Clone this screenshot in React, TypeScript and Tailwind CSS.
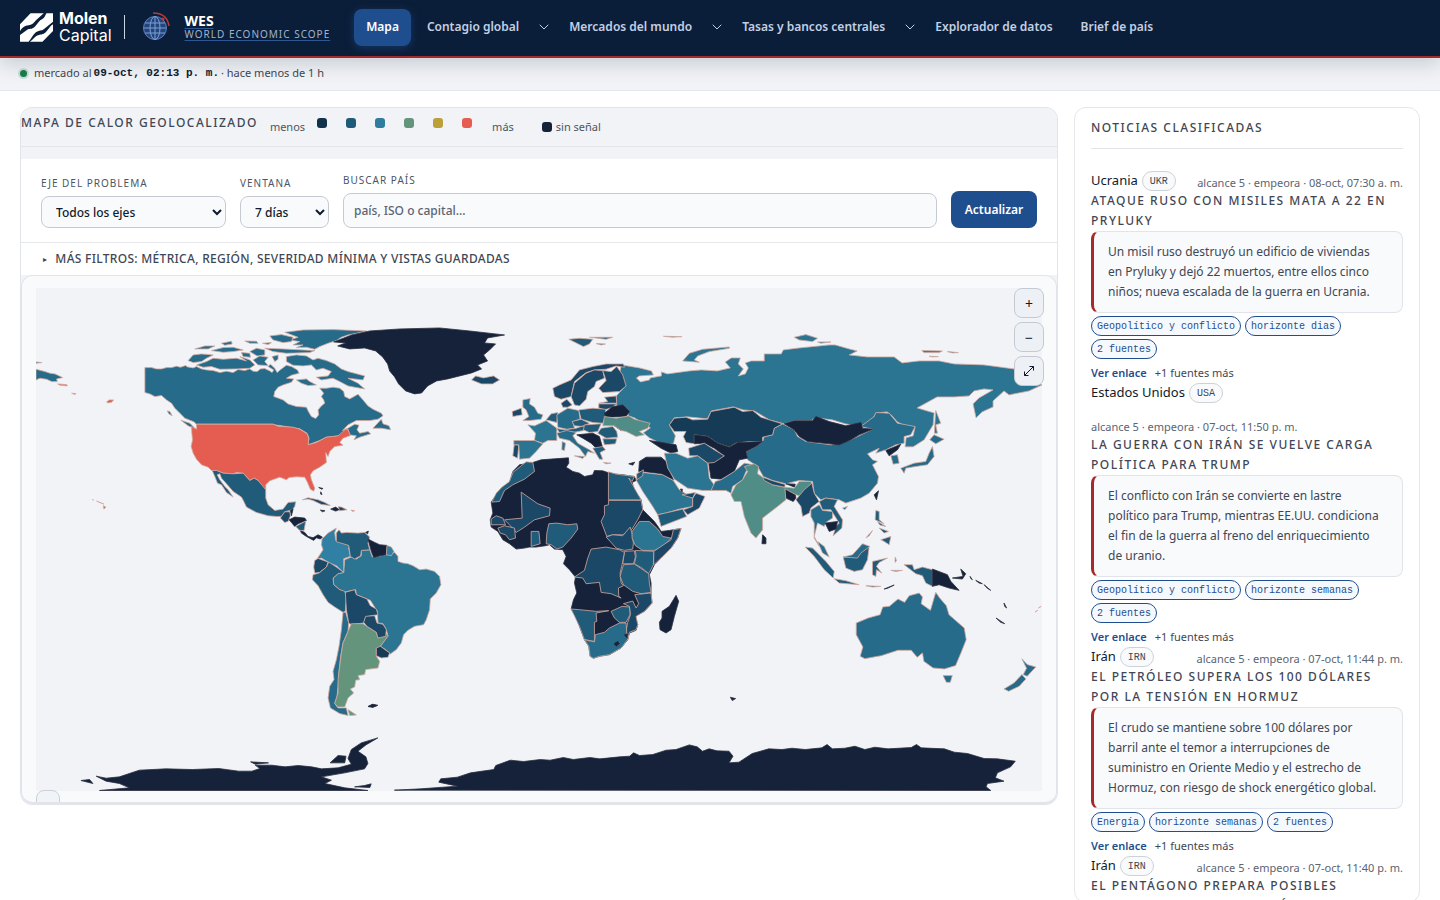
import { ChevronDown } from "lucide-react";
import React from "react";

const tones = {
  none: "#16213a",
  t1: "#163b56",
  t2: "#1b4866",
  t3: "#205b7a",
  t4: "#276b8a",
  t5: "#2b7593",
  t6: "#2f80a3",
  teal: "#508d86",
  green: "#64957c",
  red: "#e55c50",
};

type Shape = [keyof typeof tones, string];

// Every region keeps its own origin and unit so the outlines stay in whole numbers.
const regions: { transform: string; shapes: Shape[] }[] = [
  {
    transform: "translate(20 300) scale(0.33333)",
    shapes: [
      ["t4", "M375 203L395 203 410 207 425 207 440 203 455 203 470 199 482 202 497 197 503 201 520 204 530 200 545 207 560 210 580 212 600 218 620 214 640 218 655 209 675 212 690 207 700 214 712 215 722 207 735 206 750 213 757 218 762 210 745 200 752 193 765 205 772 218 785 207 800 196 815 200 833 210 838 220 815 226 800 235 822 237 815 247 790 255 775 262 765 275 762 290 790 300 805 312 830 320 860 322 866 335 875 350 888 356 897 345 895 330 905 318 915 310 912 300 905 290 912 280 900 265 920 265 940 262 960 265 972 275 975 290 990 297 1003 290 1015 283 1030 300 1045 318 1060 328 1085 340 1090 348 1075 358 1050 362 1010 362 985 375 968 392 985 385 1005 373 1018 376 1012 390 1020 400 1045 395 1053 402 1020 412 1003 420 1010 408 990 405 985 388 975 392 965 407 940 410 920 412 900 422 865 435 868 415 862 400 840 387 800 380 765 375 760 373 530 373 522 366 495 355 480 340 465 325 455 310 440 300 425 287 405 290 390 282 375 278Z"],
      ["t4", "M795 97L850 90 940 89 1040 93 1010 100 985 105 965 112 950 122 925 130 900 140 885 148 860 142 830 143 850 135 820 135 840 125 810 120 835 112Z"],
      ["t4", "M750 108L785 104 820 112 815 125 790 128 760 120ZM735 145L790 147 885 152 870 158 800 160 760 155Z"],
      ["t4", "M505 182L520 165 545 162 580 165 560 175 545 185 520 188ZM530 195L560 185 580 175 610 178 650 175 680 183 660 170 690 180 705 195 690 205 650 207 600 208 575 200 550 202Z"],
      ["t4", "M525 147L555 138 585 138 565 147ZM575 152L610 143 640 142 670 150 640 155 610 157ZM605 130L635 124 637 132 615 136ZM675 123L710 124 715 130 690 130ZM728 130L755 128 745 134ZM690 155L710 145 735 150 735 165 712 168ZM700 180L720 168 745 172 735 185 745 197 715 195ZM665 158L690 160 692 172 670 170ZM757 170L775 165 775 178 765 185Z"],
      ["t4", "M800 170L830 165 860 168 880 180 895 175 920 182 945 192 965 207 985 215 1035 228 1030 240 985 235 1015 250 1035 267 1005 262 985 258 960 245 940 235 905 240 890 232 925 228 935 215 910 205 890 210 875 195 850 198 820 196 800 185ZM830 240L860 237 870 245 890 255 865 257 845 250Z"],
      ["t4", "M1060 385L1085 358 1090 372 1108 378 1113 390 1085 385ZM483 361L510 370 528 388 505 378ZM442 333L450 335 457 348 447 342Z"],
      ["t4", "M48 208L75 215 90 220 105 222 128 233 110 237 112 245 95 245 80 238 60 235 48 240ZM48 186L66 188 48 190Z"],
      ["red", "M515 380L530 388 530 373 760 373 775 379 820 382 840 388 862 402 867 415 865 435 890 428 920 412 955 408 968 397 978 388 985 390 992 407 970 415 960 428 970 436 945 440 930 455 925 470 918 458 920 488 900 502 880 513 872 525 875 540 885 565 882 574 872 568 862 545 855 532 830 531 808 533 800 540 780 532 750 543 738 555 738 570 725 560 715 542 703 535 690 542 670 520 650 518 640 522 610 520 590 512 575 512 565 502 545 495 530 478 520 460 514 440 518 420 516 400Z"],
      ["red", "M113 252L140 254 142 258 120 256ZM155 280L168 281 165 284ZM260 306L268 300 281 300 275 307 264 309ZM217 599L221 601ZM230 604L252 613ZM250 618L258 622 252 628ZM994 631L1005 633 998 635Z"],
      ["t3", "M577 512L590 512 610 520 640 522 670 520 690 542 703 535 715 542 738 570 738 595 745 615 765 632 790 628 805 608 828 606 825 620 818 630 810 632 795 636 785 650 770 650 745 648 710 638 680 622 672 605 665 592 640 575 620 552 605 535 600 522 592 525 600 540 615 560 625 570 640 592 620 578 605 555 593 550 585 530Z"],
      ["t2", "M782 655L795 636 810 636 812 648 805 665 795 668ZM848 600L865 594 895 600 915 608 932 617 905 614 880 602 865 598ZM955 621L965 622 982 630 960 633Z"],
      ["none", "M812 632L820 628 815 648ZM808 660L825 652 855 655 860 662 835 672 825 680 815 668ZM842 692L855 698 865 710 880 714 895 705 908 712 902 718 890 714 882 722 860 710 845 700ZM933 628L948 622 958 630 948 634ZM902 631L916 633 908 636ZM897 563L910 566 906 568ZM903 576L907 584 903 583Z"],
      ["t3", "M828 680L858 664 853 692 840 692Z"],
    ],
  },
  {
    transform: "",
    shapes: [
      ["none", "M334 342L352 335 370 331 400 329 440 328 470 331 505 335 488 338 485 343 496 344 490 350 484 355 488 361 478 365 482 369 472 373 460 376 448 379 437 381 428 386 422 393 415 394 406 391 399 384 395 377 390 371 388 364 383 357 376 351 365 348 350 349 338 346 346 343Z"],
      ["t2", "M472 380L476 376 484 378 494 376 500 380 493 384 482 384Z"],
      ["t5", "M622 365L640 368 652 371 654 375 640 376 637 378 641 382 650 380 651 378 662 376 662 372 668 374 690 371 702 370 718 371 731 368 726 362 732 358 741 358 739 364 744 369 739 376 746 374 749 368 746 363 752 361 765 361 765 354 782 354 784 350 800 348 830 345 836 345 850 349 858 351 850 355 868 357 895 357 903 363 920 361 940 361 955 364 985 365 1015 369 1043 385 1030 391 1010 395 1005 391 994 401 994 407 983 412 977 418 974 404 980 398 994 390 985 389 975 391 970 396 955 397 938 397 918 408 928 411 935 413 934 425 925 440 914 447 906 447 907 438 914 436 916 427 906 426 898 422 893 416 888 412 877 413 872 421 864 427 846 424 833 420 816 418 812 421 795 421 785 424 770 420 755 411 744 410 734 407 712 411 708 419 688 417 675 418 670 425 676 436 674 444 660 443 650 438 644 433 651 428 635 418 629 416 628 410 617 405 617 396 626 386 620 374Z"],
    ],
  },
  {
    transform: "translate(280 480) scale(0.33333)",
    shapes: [
      ["t5", "M192 278L195 240 215 232 230 238 245 228 245 212 270 210 278 232 305 228 322 225 345 218 355 230 355 245 370 250 385 252 400 258 420 270 440 268 465 275 480 290 484 315 470 340 452 358 450 390 440 420 432 435 405 440 385 452 372 465 365 490 350 510 332 523 318 510 302 500 325 468 320 450 310 432 295 430 293 395 272 362 230 345 228 330 195 337 180 330 162 315 160 295 175 282Z"],
      ["t6", "M127 178L145 160 170 145 165 158 168 182 190 190 210 197 207 205 212 230 192 237 192 278 170 258 150 250 125 235 112 238 130 210 125 195Z"],
      ["t3", "M170 160L178 150 185 160 200 158 235 160 255 158 270 172 265 190 270 210 245 212 243 228 225 238 212 230 207 197 170 186Z"],
      ["none", "M265 178L285 188 300 195 322 197 320 225 302 228 282 233 275 215ZM258 158L266 154 264 162ZM265 681L278 675 292 678 280 683Z"],
      ["t6", "M322 197L335 202 343 215 335 228 320 225Z"],
      ["t2", "M105 242L115 236 145 247 140 262 120 278 105 280 102 262Z"],
      ["t3", "M100 285L118 280 140 262 147 247 170 262 192 278 175 282 160 295 162 315 180 330 195 335 200 350 197 395 190 398 165 382 145 368 130 345 115 318 98 300Z"],
      ["t4", "M190 398L198 398 207 430 205 455 190 490 183 530 178 575 175 620 172 650 165 672 175 685 200 685 205 708 180 702 152 685 145 655 150 620 163 600 160 575 170 540 178 500 185 450Z"],
      ["t2", "M197 338L225 330 230 345 262 358 272 378 290 388 295 405 275 408 258 412 252 430 215 435 207 430 200 390Z"],
      ["green", "M215 432L250 432 262 440 290 458 295 475 322 462 325 470 302 500 290 510 290 530 300 545 295 565 258 570 255 585 235 588 240 600 228 602 225 622 212 628 222 640 205 655 195 682 175 682 165 672 175 640 175 600 180 560 185 520 190 490 205 455ZM205 690L230 706 210 708Z"],
      ["t2", "M252 428L258 410 285 408 292 430 310 434 320 450 318 470 295 475 290 458 262 440Z"],
      ["t1", "M290 505L302 500 330 520 325 533 305 535 290 528Z"],
    ],
  },
  {
    transform: "translate(470 440) scale(0.33333)",
    shapes: [
      ["none", "M65 187L75 172 95 145 120 128 130 95 150 75 190 68 215 60 255 57 297 54 298 70 290 82 310 95 330 100 345 110 370 105 375 92 400 93 415 98 440 103 462 105 480 108 495 110 500 122 488 128 495 150 515 180 520 210 535 225 555 245 567 262 575 275 600 272 635 266 625 295 605 325 580 350 555 375 540 405 545 430 545 462 548 490 525 515 498 530 505 555 500 572 480 580 475 600 455 625 420 645 390 650 372 656 362 650 358 620 345 600 330 560 318 530 305 508 312 480 322 460 315 430 318 412 300 390 282 372 290 350 280 330 255 328 240 315 228 318 200 322 180 322 165 325 140 328 120 312 100 300 85 275 65 262 62 240 70 220Z"],
      ["t3", "M190 68L195 95 165 118 130 135 105 152 90 185 67 187 80 160 100 140 120 125 130 98 155 78 170 66Z"],
      ["t2", "M155 157L205 192 242 205 240 228 195 240 165 262 140 278 132 268 105 240 158 235Z"],
      ["t2", "M65 238L80 228 100 235 108 255 65 255ZM85 265L105 258 135 265 138 295 120 300 108 285 92 280Z"],
      ["t3", "M185 275L208 275 212 312 185 320Z"],
      ["t3", "M238 252L262 250 295 255 322 252 325 268 305 295 280 322 262 328 245 315 230 312 232 280Z"],
      ["t3", "M417 96L440 103 480 108 495 110 488 125 478 115 515 180 417 180Z"],
      ["t2", "M417 182L515 182 520 210 505 240 488 268 480 275 460 285 430 285 412 290 395 245 405 225 405 198 417 195Z"],
      ["t2", "M410 292L430 285 460 288 482 262 488 280 492 310 490 328 465 332 440 325 425 308Z"],
      ["t5", "M488 275L510 245 540 245 565 268 580 290 605 295 585 318 555 332 520 332 498 318 488 295Z"],
      ["t2", "M553 335L605 300 612 270 635 266 625 295 605 325 580 350 553 375Z"],
      ["t3", "M498 332L553 335 552 375 538 402 518 385 495 372 500 350Z"],
      ["t2", "M465 335L495 333 498 352 492 372 460 372Z"],
      ["t2", "M365 328L410 322 450 330 465 338 458 375 452 400 455 430 462 438 447 445 448 470 455 475 425 462 395 458 390 428 350 432 340 415 315 412 345 392 355 355Z"],
      ["t3", "M462 375L495 373 538 402 540 430 545 458 515 462 490 455 462 435 452 410Z"],
      ["t2", "M496 465L545 460 548 490 525 515 500 530 505 555 500 570 480 578 475 600 470 575 475 548 483 525 480 500 462 492 490 484 500 505 508 492Z"],
      ["t3", "M425 515L458 500 480 502 482 525 470 548 450 548 435 535Z"],
      ["t3", "M305 508L330 510 380 515 418 513 380 520 382 545 375 548 375 605 345 600 330 560Z"],
      ["t4", "M345 600L375 607 378 585 405 578 420 565 450 550 470 550 472 580 478 595 455 625 420 645 390 650 372 656 362 650 358 620Z"],
      ["none", "M434 612L445 605 450 612 440 620ZM465 585L475 583 472 595ZM620 467L628 485 615 530 605 570 590 580 572 570 570 548 578 535 578 515 600 500 612 480Z"],
    ],
  },
  {
    transform: "translate(480 320) scale(0.33333)",
    shapes: [
      ["t2", "M220 205L240 195 275 180 300 150 340 140 380 132 432 132 435 142 410 138 380 148 345 150 320 158 285 185 275 230 245 238 225 230Z"],
      ["t2", "M275 230L285 190 320 160 345 150 370 152 375 175 350 185 345 200 325 215 320 238 300 258 285 255Z"],
      ["t2", "M370 152L395 155 412 140 430 165 440 198 420 215 370 218 358 205 380 182Z"],
      ["t2", "M245 250L262 238 278 255 265 262 250 262ZM375 232L410 228 412 250 358 250 385 245ZM358 252L412 252 395 264 375 270 358 264Z"],
      ["t4", "M130 240L152 236 150 252 165 262 175 280 190 285 185 298 150 302 130 302 148 290 140 270 130 262Z"],
      ["t2", "M98 275L125 265 128 285 100 290ZM104 375L118 375 114 415 100 408Z"],
      ["t5", "M145 315L165 318 200 302 232 325 232 362 205 362 190 370 165 362 168 340Z"],
      ["t5", "M103 362L165 362 190 372 170 395 150 415 120 418 118 375 103 375Z"],
      ["t3", "M200 300L215 282 235 278 232 308Z"],
      ["t4", "M232 285L265 265 298 272 302 298 280 305 285 325 262 328 235 322Z"],
      ["t3", "M298 270L340 265 378 268 380 290 370 310 340 308 305 298Z"],
      ["t3", "M278 305L305 298 330 310 310 320 285 318ZM232 326L255 330 290 325 320 315 312 332 285 337 240 338Z"],
      ["t3", "M315 315L365 312 355 335 330 338 312 330Z"],
      ["t4", "M232 340L262 332 290 338 280 348 295 370 330 390 345 400 325 395 318 410 300 385 270 362 240 355ZM285 408L315 410 310 416ZM248 365L258 370 255 392 247 390Z"],
      ["t3", "M365 325L400 320 412 335 415 352 380 355 355 340ZM370 357L412 357 408 372 375 375Z"],
      ["none", "M292 345L340 340 360 350 370 385 350 385 335 370 310 355Z"],
      ["t3", "M340 385L370 380 378 390 362 398 370 418 360 418ZM372 428L395 430 380 432Z"],
      ["none", "M375 280L400 260 430 255 450 275 440 290 380 292Z"],
      ["none", "M405 318L418 318 425 332Z"],
      ["teal", "M375 290L410 295 448 288 465 298 512 310 505 325 480 335 495 345 470 350 440 335 425 332 405 318 370 318Z"],
      ["none", "M448 432L466 427 460 436ZM510 362L550 368 590 375 595 395 575 400 545 385ZM480 425L500 412 545 412 560 425 582 480 545 462 490 455 478 455Z"],
      ["t5", "M470 480L490 458 550 465 582 482 600 510 640 535 640 560 600 568 560 580 535 585 520 560 490 515Z"],
      ["t3", "M472 462L492 450 490 468 472 480ZM535 585L610 568 622 590 545 620Z"],
      ["t2", "M640 535L650 520 677 530 660 565 625 585 612 570 640 560ZM608 525L648 518 640 535Z"],
      ["none", "M603 508L609 508 608 516Z"],
      ["t3", "M268 58L300 55 340 58 330 72 312 80ZM330 52L400 52 380 58ZM350 71L378 72 365 75Z"],
    ],
  },
  {
    transform: "translate(640 320) scale(0.33333)",
    shapes: [
      ["t4", "M320 395L350 380 370 365 375 350 400 345 405 325 430 312 465 330 475 350 500 365 575 375 635 360 700 328 665 320 705 290 710 278 750 280 775 310 828 320 815 345 795 350 795 370 770 375 740 390 710 400 720 385 685 402 700 420 715 425 700 435 718 470 715 490 690 520 665 535 620 550 600 540 560 535 545 540 525 520 520 485 480 482 440 492 400 482 372 470 355 440 325 420Z"],
      ["t1", "M90 315L105 295 140 292 160 300 205 298 215 275 285 262 310 275 340 272 365 292 390 300 430 312 405 325 400 345 370 352 370 365 330 365 290 370 270 382 235 370 205 350 165 345 165 372 140 368 132 350 140 335 105 335Z"],
      ["none", "M165 345L205 350 235 370 270 382 295 368 370 365 350 380 320 395 325 415 300 420 285 455 245 478 215 475 208 430 255 408 225 385 195 370 165 372Z"],
      ["t2", "M148 385L195 370 225 390 255 408 225 428 205 430 175 408 150 408Z"],
      ["t5", "M75 400L110 400 145 415 175 408 205 430 210 475 228 500 215 512 190 512 145 505 105 478 85 445Z"],
      ["t4", "M215 512L228 485 245 480 285 455 315 430 345 435 320 455 310 480 280 500 275 520 260 512Z"],
      ["none", "M437 505L465 510 470 535 462 545 440 535ZM440 492L468 493 466 502ZM370 645L380 655 380 672 368 672Z"],
      ["teal", "M275 525L290 495 310 480 325 455 315 440 345 432 358 440 355 462 375 475 400 495 436 502 465 505 480 485 515 485 520 500 495 515 485 530 470 525 437 507 440 540 415 560 370 595 370 630 350 655 335 640 315 590 305 545 285 545Z"],
      ["t2", "M370 472L400 483 438 494 436 502 400 495 375 482Z"],
      ["none", "M435 312L465 303 520 303 530 290 570 305 620 318 665 308 670 325 700 328 660 345 635 360 600 375 505 365 480 350 465 330ZM740 392L785 373 775 390 750 408ZM705 525L718 513 712 540Z"],
      ["t4", "M755 408L775 405 780 430 762 433ZM785 445L825 430 860 425 870 400 880 380 885 410 865 435 830 440 800 445 795 460ZM872 360L885 345 915 358 890 372ZM610 565L625 560 617 570Z"],
      ["t5", "M890 272L905 310 890 315 895 340 886 340 888 300Z"],
      ["t2", "M470 540L495 510 518 490 525 520 540 545 515 565 510 580 490 590 485 560Z"],
      ["t4", "M515 570L540 555 550 572 580 575 580 595 560 608 555 620 535 610 525 650 540 680 525 655 525 610 515 590Z"],
      ["t3", "M540 545L560 535 595 540 585 560 610 600 608 625 582 648 590 620 600 610 575 570 550 570Z"],
      ["none", "M558 610L595 605 590 628 570 635Z"],
      ["t4", "M535 665L555 680 570 712 550 700Z"],
      ["t3", "M498 682L520 685 560 725 585 755 582 775 555 750 525 710ZM585 777L620 783 660 795 600 790ZM612 712L640 710 670 685 690 680 685 720 670 750 645 755 620 745Z"],
      ["t4", "M612 712L640 705 670 672 692 680 665 700 655 715Z"],
      ["t3", "M700 725L745 715 720 728 712 740 728 760 712 750 710 770 700 765ZM768 712L772 722 768 728ZM755 752L790 752 770 755ZM710 572L720 575 720 600 735 612 708 600ZM725 660L755 650 750 675 735 665ZM680 655L700 632 690 648ZM715 605L740 620 722 616ZM720 625L748 635 735 640Z"],
      ["t3", "M795 735L820 735 825 750 850 742 880 750 880 800 860 790 850 768 830 762ZM680 798L725 800 700 802Z"],
      ["none", "M880 748L925 765 935 785 960 812 930 805 900 795 880 800ZM940 775L972 770 965 748 980 762 970 778ZM993 770L1000 780 995 776ZM1010 782L1030 792 1020 790ZM1035 795L1055 812 1045 806ZM735 808L765 796 745 806Z"],
      ["t5", "M130 123L150 100 190 88 270 81 270 85 210 95 175 108 165 120 180 127ZM465 52L500 44 535 55 520 65 480 60ZM535 66L575 66 545 70ZM848 92L910 93 900 98 855 98ZM925 95L958 98 940 99ZM72 49L128 50 100 52ZM870 109L898 110 880 111Z"],
    ],
  },
  {
    transform: "translate(20 560) scale(0.66327 0.33333)",
    shapes: [
      ["t4", "M1262 190L1280 175 1298 165 1302 142 1312 140 1325 118 1335 128 1342 108 1357 100 1362 112 1360 132 1374 152 1382 98 1388 115 1398 138 1402 165 1425 205 1428 240 1420 280 1412 318 1395 328 1378 325 1364 305 1362 280 1354 293 1345 272 1325 272 1300 288 1275 297 1268 290 1272 262 1262 225Z"],
      ["t4", "M1393 348L1407 348 1404 368 1398 368ZM1512 297L1520 315 1533 322 1520 350 1514 345 1519 326ZM1512 345L1518 358 1508 380 1492 395 1485 388 1500 370Z"],
      ["none", "M1473 175L1486 192 1480 188ZM1485 130L1489 145 1486 140ZM1072 413L1080 417 1075 423ZM526 440L532 434 540 437 532 443Z"],
      ["red", "M1532 157L1536 152ZM1537 145L1541 140Z"],
      ["none", "M92 663L105 660 110 672ZM115 650L130 656 150 652 165 642 180 632 220 628 260 630 300 627 330 635 350 635 362 627 355 617 380 617 400 622 420 618 440 622 455 628 480 625 500 614 495 597 500 570 515 550 540 535 522 556 510 575 522 592 525 612 520 628 490 640 455 652 470 662 460 672 490 685 525 693 120 693 165 685 150 672 130 665ZM468 610L480 588 492 590 490 610ZM505 682L520 678 530 673 528 684ZM348 607L375 610 355 614Z"],
      ["none", "M565 692L605 688 660 680 632 668 635 658 660 653 680 640 715 630 718 618 740 602 760 606 785 600 800 602 820 594 835 600 860 594 875 598 905 592 920 590 926 580 935 588 955 585 975 572 990 570 1010 556 1022 562 1030 575 1040 568 1052 574 1070 575 1076 590 1070 610 1085 608 1105 582 1130 568 1150 570 1165 566 1185 570 1210 565 1218 555 1226 568 1245 566 1260 560 1275 570 1290 563 1310 568 1345 564 1353 555 1360 565 1395 568 1410 578 1430 582 1455 597 1475 598 1502 605 1495 622 1475 640 1472 655 1485 665 1460 672 1458 682 1465 693Z"],
    ],
  },
];

const news = [
  {
    country: "Ucrania",
    iso: "UKR",
    meta: "alcance 5 · empeora · 08-oct, 07:30 a. m.",
    title: "Ataque ruso con misiles mata a 22 en Pryluky",
    text: "Un misil ruso destruyó un edificio de viviendas en Pryluky y dejó 22 muertos, entre ellos cinco niños; nueva escalada de la guerra en Ucrania.",
    tags: ["Geopolítico y conflicto", "horizonte dias", "2 fuentes"],
  },
  {
    country: "Estados Unidos",
    iso: "USA",
    meta: "alcance 5 · empeora · 07-oct, 11:50 p. m.",
    title: "La guerra con Irán se vuelve carga política para Trump",
    text: "El conflicto con Irán se convierte en lastre político para Trump, mientras EE.UU. condiciona el fin de la guerra al freno del enriquecimiento de uranio.",
    tags: ["Geopolítico y conflicto", "horizonte semanas", "2 fuentes"],
  },
  {
    country: "Irán",
    iso: "IRN",
    meta: "alcance 5 · empeora · 07-oct, 11:44 p. m.",
    title: "El petróleo supera los 100 dólares por la tensión en Hormuz",
    text: "El crudo se mantiene sobre 100 dólares por barril ante el temor a interrupciones de suministro en Oriente Medio y el estrecho de Hormuz, con riesgo de shock energético global.",
    tags: ["Energía", "horizonte semanas", "2 fuentes"],
  },
  {
    country: "Irán",
    iso: "IRN",
    meta: "alcance 5 · empeora · 07-oct, 11:40 p. m.",
    title: "El Pentágono prepara posibles ataques limitados en Irán",
    text: "",
    tags: [],
  },
];

const navItems = [
  { label: "Contagio global", menu: true },
  { label: "Mercados del mundo", menu: true },
  { label: "Tasas y bancos centrales", menu: true },
  { label: "Explorador de datos", menu: false },
  { label: "Brief de país", menu: false },
];

function Header() {
  return (
    <header className="relative z-10 flex h-[58px] shrink-0 items-center border-b-2 border-[#a52a2a] bg-[#0b1e39] px-5 pb-0.5 shadow-[0_6px_20px_rgba(11,30,57,0.18)]">
      <a href="#" className="flex items-center gap-1.5 text-white">
        <svg viewBox="0 0 100 87" className="h-[29px] w-[33px]" fill="currentColor">
          <path d="M32 0H72L50 20C44 26 38 36 26 37C14 38 6 44 0 54V34Z" />
          <path d="M80 0H100V26L72 49C66 54 56 52 48 58C38 66 34 78 26 87H0V66L22 50C28 46 36 50 44 42C54 32 58 22 68 18C74 14 76 8 80 0Z" />
          <path d="M100 34V54L68 87H30C40 80 44 72 52 68C62 64 70 66 78 58C88 48 90 40 100 34Z" />
        </svg>
        <span className="flex flex-col font-['Inter'] text-[16px] leading-[17px]">
          <span className="font-bold">Molen</span>
          <span>Capital</span>
        </span>
      </a>
      <span className="ml-3 h-6 w-px bg-slate-300" />
      <a href="#" className="ml-4 flex items-center gap-3.5">
        <svg viewBox="0 0 30 30" className="size-[30px]" fill="none" stroke="#7f9fd6" strokeWidth="1">
          <circle cx="14" cy="16" r="11.500" fill="#24447c" stroke="#5d7fbd" />
          <ellipse cx="14" cy="16" rx="5" ry="11.500" />
          <path d="M14 4V28M3 16H25M4 11H24M4 21H24" />
          <path d="M12 1Q26 1 28 14" stroke="#b93a3a" strokeWidth="1.500" />
          <circle cx="22" cy="7" r="1.500" fill="#b93a3a" stroke="none" />
        </svg>
        <span className="flex flex-col underline decoration-[#2c5690] underline-offset-2">
          <span className="text-[14px] font-bold leading-[14px] text-white">WES</span>
          <span className="text-[10px] leading-[13px] tracking-[1px] text-[#9fb3d1]">WORLD ECONOMIC SCOPE</span>
        </span>
      </a>
      <nav className="ml-6 flex items-center text-[12px] font-semibold text-[#c3d0e3]">
        <a href="#" className="mr-4 flex h-[37px] items-center rounded-lg bg-[#1f4e8f] px-3 text-white shadow-[0_2px_8px_rgba(31,78,143,0.5)]">
          Mapa
        </a>
        {navItems.map(({ label, menu }) => (
          <span key={label} className="mr-7 flex items-center last:mr-0 has-[button]:mr-4">
            <a href="#" className="whitespace-nowrap">{label}</a>
            {menu && (
              <button type="button" aria-label={`Abrir ${label}`} className="ml-4 p-px">
                <ChevronDown size={16} strokeWidth={1.5} />
              </button>
            )}
          </span>
        ))}
      </nav>
    </header>
  );
}

function Legend() {
  return (
    <div className="flex h-[39px] items-center border-b border-[#e3e6ea] bg-[#f1f3f6]">
      <h2 className="mb-2 text-[12px] font-medium uppercase tracking-[1.5px] text-[#3f4754]">Mapa de calor geolocalizado</h2>
      <div className="ml-3 flex items-center text-[11px] text-[#4b5563]">
        <span>menos</span>
        <div className="mb-2 ml-3 flex gap-[19px]">
          <i className="size-2.5 rounded-[3px] bg-[#12324c]" />
          <i className="size-2.5 rounded-[3px] bg-[#1f5a78]" />
          <i className="size-2.5 rounded-[3px] bg-[#2e7c9e]" />
          <i className="size-2.5 rounded-[3px] bg-[#64957c]" />
          <i className="size-2.5 rounded-[3px] bg-[#bba03a]" />
          <i className="size-2.5 rounded-[3px] bg-[#e55c50]" />
        </div>
        <span className="ml-5">más</span>
        <i className="ml-7 mr-1 size-2.5 rounded-[3px] bg-[#16213a]" />
        <span>sin señal</span>
      </div>
    </div>
  );
}

function Filters() {
  return (
    <form className="mt-3 flex items-end gap-3.5 border-b border-[#e5e7eb] bg-white px-5 pb-3.5 pt-3.5">
      <div className="flex flex-col gap-1.5">
        <label htmlFor="eje" className="text-[10px] uppercase leading-[14px] tracking-[1px] text-[#4b5563]">Eje del problema</label>
        <select id="eje" className="h-8 w-[185px] rounded-lg border border-[#c6cbd3] bg-[#f8fafc] px-2.5 text-[12px] font-medium text-[#0f1b2d]">
          <option>Todos los ejes</option>
        </select>
      </div>
      <div className="flex flex-col gap-1.5">
        <label htmlFor="ventana" className="text-[10px] uppercase leading-[14px] tracking-[1px] text-[#4b5563]">Ventana</label>
        <select id="ventana" className="h-8 w-[89px] rounded-lg border border-[#c6cbd3] bg-[#f8fafc] px-2.5 text-[12px] font-medium text-[#0f1b2d]">
          <option>7 días</option>
        </select>
      </div>
      <div className="flex flex-1 flex-col gap-1.5">
        <label htmlFor="pais" className="text-[10px] uppercase leading-[14px] tracking-[1px] text-[#4b5563]">Buscar país</label>
        <input
          id="pais"
          type="search"
          placeholder="país, ISO o capital..."
          className="h-[35px] rounded-lg border border-[#c6cbd3] bg-[#f8fafc] px-2.5 text-[12px] font-medium placeholder:text-[#5b6472]"
        />
      </div>
      <button type="button" className="h-[37px] w-[86px] rounded-lg bg-[#1f4e8f] text-[12px] font-semibold text-white">
        Actualizar
      </button>
    </form>
  );
}

function WorldMap() {
  const control = "flex size-[30px] items-center justify-center rounded-lg border border-[#c3cad4] bg-[#edf1f5] text-[14px] text-[#0f1b2d]";
  return (
    <div className="relative overflow-hidden rounded-xl border border-b-2 border-[#e1e5ea] bg-[#f8fafc] px-3.5 pb-[11px] pt-3">
      <svg viewBox="36 288 1007 503" className="block w-full bg-[#f1f3f7]" role="img" aria-label="Mapa de calor">
        {regions.map(({ transform, shapes }) => (
          <g key={transform} transform={transform}>
            {shapes.map(([tone, d]) => (
              <path
                key={d}
                d={d}
                fill={tones[tone]}
                stroke={tone === "none" ? "#2a3040" : "#d3aaa0"}
                strokeWidth="0.8"
                strokeLinejoin="round"
                vectorEffect="non-scaling-stroke"
              />
            ))}
          </g>
        ))}
      </svg>
      <div className="absolute right-3 top-3 flex flex-col gap-1">
        <button type="button" className={control} aria-label="Acercar">+</button>
        <button type="button" className={control} aria-label="Alejar">−</button>
        <button type="button" className={control} aria-label="Ampliar">
          <svg viewBox="0 0 12 12" className="size-3" fill="none" stroke="currentColor">
            <path d="M1.500 10.500L10.500 1.500M6.500 1.500H10.500V5.500M1.500 6.500V10.500H5.500" />
          </svg>
        </button>
      </div>
      <span className="absolute -bottom-3 left-3.5 h-6 w-6 rounded-lg border border-[#c9d0d9] bg-[#f1f4f7]" />
    </div>
  );
}

function News() {
  return (
    <aside className="max-h-[calc(100vh-104px)] overflow-hidden rounded-xl border border-[#e5e7eb] bg-white px-4">
      <h2 className="mb-[22px] border-b border-[#e1e4e8] pb-2.5 pt-2.5 text-[12px] font-medium uppercase leading-5 tracking-[1.5px] text-[#3f4754]">
        Noticias clasificadas
      </h2>
      {news.map(({ country, iso, meta, title, text, tags }) => (
        <article key={title}>
          <div className="flex flex-wrap items-end justify-between gap-x-3 gap-y-[15px]">
            <div className="flex h-5 items-center gap-1 text-[13px] text-[#0f1b2d]">
              {country}
              <span className="flex h-5 items-center rounded-full border border-[#cdd2d9] bg-[#f8fafc] px-[7px] font-['Liberation_Mono'] text-[10px] text-[#3f4754]">{iso}</span>
            </div>
            <span className="text-[11px] leading-[17px] text-[#5b6472]">{meta}</span>
          </div>
          <h3 className="text-[12px] font-medium uppercase leading-5 tracking-[1.5px] text-[#3f4754]">{title}</h3>
          {text && (
            <p className="rounded-lg border border-l-[3px] border-[#e1e4e8] border-l-[#a52a2a] bg-[#f8fafc] py-2.5 pl-3.5 pr-5 text-[12px] leading-5 text-[#3f4754]">
              {text}
            </p>
          )}
          <div className="mt-[3px] flex flex-wrap gap-x-1 gap-y-[3px]">
            {tags.map((tag) => (
              <span key={tag} className="flex h-5 items-center rounded-full border border-[#1f4e8f] bg-[#f5f9fd] px-[5px] font-['Liberation_Mono'] text-[10px] text-[#1f4e8f]">
                {tag}
              </span>
            ))}
          </div>
          <div className="flex h-6 items-center gap-2 pt-1 text-[11px]">
            <a href="#" className="font-semibold text-[#1f4e8f]">Ver enlace</a>
            <span className="text-[#3f4754]">+1 fuentes más</span>
          </div>
        </article>
      ))}
    </aside>
  );
}

export default function App() {
  return (
    <div className="flex h-screen flex-col overflow-hidden bg-white font-['Noto_Sans',sans-serif]">
      <Header />
      <div className="flex h-[33px] shrink-0 items-center border-b border-[#e3e6ea] bg-[#f1f3f6] px-5 pb-0.5 text-[11px] text-[#3f4754]">
        <span className="mr-[7px] size-[7px] rounded-full bg-[#1c7c4d] ring-2 ring-[#c9e0d5]" />
        mercado al
        <b className="mx-0.5 font-['Liberation_Mono'] text-[#0f1b2d]">09-oct, 02:13 p. m.</b>
        · hace menos de 1 h
      </div>
      <main className="grid grid-cols-[minmax(0,1fr)_346px] items-start gap-4 px-5 pt-4">
        <section className="overflow-hidden rounded-xl border border-[#e1e5ea] bg-[#f1f3f6]">
          <Legend />
          <Filters />
          <details className="bg-white">
            <summary className="flex h-8 cursor-pointer items-center gap-2 px-[22px] text-[12px] font-medium uppercase tracking-wide text-[#3f4754]">
              <span className="text-[8px]">▸</span>
              Más filtros: métrica, región, severidad mínima y vistas guardadas
            </summary>
          </details>
          <WorldMap />
        </section>
        <News />
      </main>
    </div>
  );
}
